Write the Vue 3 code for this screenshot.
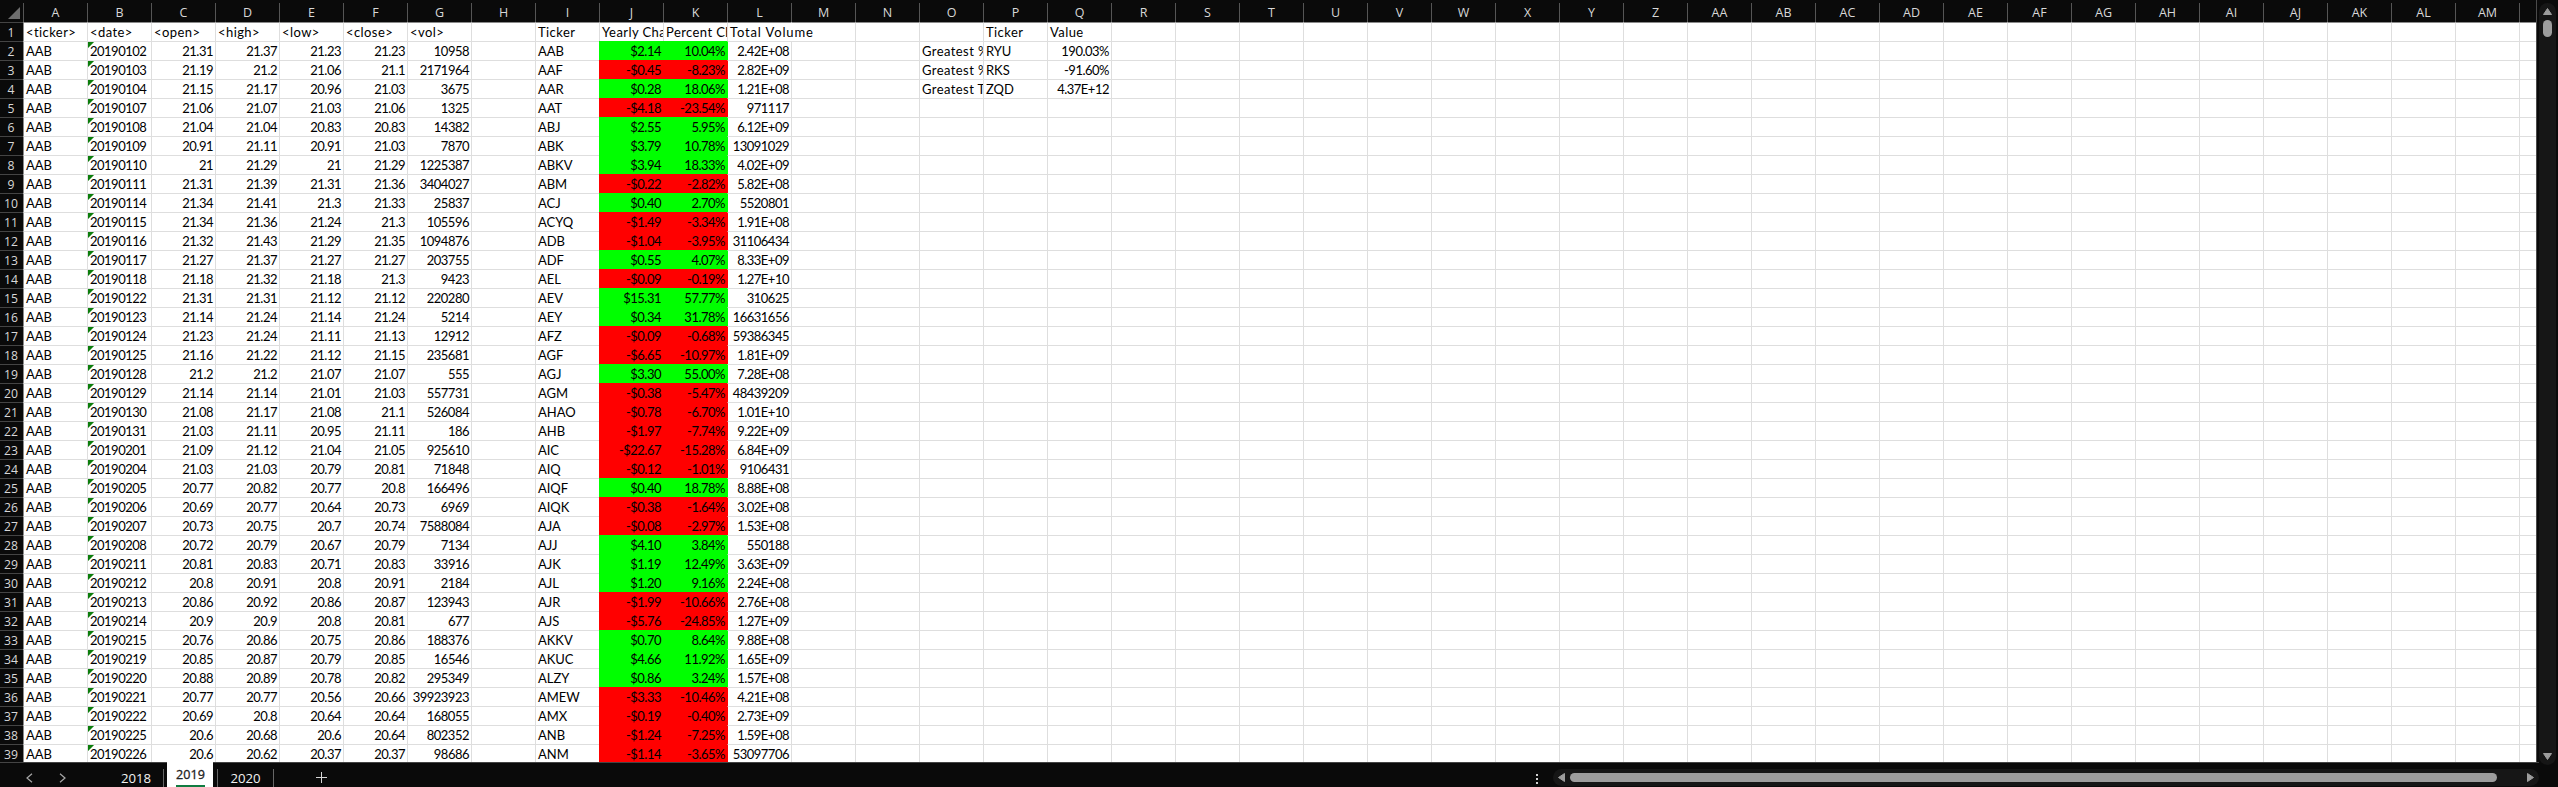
<script setup>
const colName = (i) => (i < 26 ? '' : 'A') + String.fromCharCode(65 + (i % 26))
const columns = Array.from({ length: 39 }, (_, i) => colName(i))

const prices = `20190102 21.31 21.37 21.23 21.23 10958
20190103 21.19 21.2 21.06 21.1 2171964
20190104 21.15 21.17 20.96 21.03 3675
20190107 21.06 21.07 21.03 21.06 1325
20190108 21.04 21.04 20.83 20.83 14382
20190109 20.91 21.11 20.91 21.03 7870
20190110 21 21.29 21 21.29 1225387
20190111 21.31 21.39 21.31 21.36 3404027
20190114 21.34 21.41 21.3 21.33 25837
20190115 21.34 21.36 21.24 21.3 105596
20190116 21.32 21.43 21.29 21.35 1094876
20190117 21.27 21.37 21.27 21.27 203755
20190118 21.18 21.32 21.18 21.3 9423
20190122 21.31 21.31 21.12 21.12 220280
20190123 21.14 21.24 21.14 21.24 5214
20190124 21.23 21.24 21.11 21.13 12912
20190125 21.16 21.22 21.12 21.15 235681
20190128 21.2 21.2 21.07 21.07 555
20190129 21.14 21.14 21.01 21.03 557731
20190130 21.08 21.17 21.08 21.1 526084
20190131 21.03 21.11 20.95 21.11 186
20190201 21.09 21.12 21.04 21.05 925610
20190204 21.03 21.03 20.79 20.81 71848
20190205 20.77 20.82 20.77 20.8 166496
20190206 20.69 20.77 20.64 20.73 6969
20190207 20.73 20.75 20.7 20.74 7588084
20190208 20.72 20.79 20.67 20.79 7134
20190211 20.81 20.83 20.71 20.83 33916
20190212 20.8 20.91 20.8 20.91 2184
20190213 20.86 20.92 20.86 20.87 123943
20190214 20.9 20.9 20.8 20.81 677
20190215 20.76 20.86 20.75 20.86 188376
20190219 20.85 20.87 20.79 20.85 16546
20190220 20.88 20.89 20.78 20.82 295349
20190221 20.77 20.77 20.56 20.66 39923923
20190222 20.69 20.8 20.64 20.64 168055
20190225 20.6 20.68 20.6 20.64 802352
20190226 20.6 20.62 20.37 20.37 98686`.split('\n').map((l) => l.split(' '))

const summary = `AAB $2.14 10.04% 2.42E+08
AAF -$0.45 -8.23% 2.82E+09
AAR $0.28 18.06% 1.21E+08
AAT -$4.18 -23.54% 971117
ABJ $2.55 5.95% 6.12E+09
ABK $3.79 10.78% 13091029
ABKV $3.94 18.33% 4.02E+09
ABM -$0.22 -2.82% 5.82E+08
ACJ $0.40 2.70% 5520801
ACYQ -$1.49 -3.34% 1.91E+08
ADB -$1.04 -3.95% 31106434
ADF $0.55 4.07% 8.33E+09
AEL -$0.09 -0.19% 1.27E+10
AEV $15.31 57.77% 310625
AEY $0.34 31.78% 16631656
AFZ -$0.09 -0.68% 59386345
AGF -$6.65 -10.97% 1.81E+09
AGJ $3.30 55.00% 7.28E+08
AGM -$0.38 -5.47% 48439209
AHAO -$0.78 -6.70% 1.01E+10
AHB -$1.97 -7.74% 9.22E+09
AIC -$22.67 -15.28% 6.84E+09
AIQ -$0.12 -1.01% 9106431
AIQF $0.40 18.78% 8.88E+08
AIQK -$0.38 -1.64% 3.02E+08
AJA -$0.08 -2.97% 1.53E+08
AJJ $4.10 3.84% 550188
AJK $1.19 12.49% 3.63E+09
AJL $1.20 9.16% 2.24E+08
AJR -$1.99 -10.66% 2.76E+08
AJS -$5.76 -24.85% 1.27E+09
AKKV $0.70 8.64% 9.88E+08
AKUC $4.66 11.92% 1.65E+09
ALZY $0.86 3.24% 1.57E+08
AMEW -$3.33 -10.46% 4.21E+08
AMX -$0.19 -0.40% 2.73E+09
ANB -$1.24 -7.25% 1.59E+08
ANM -$1.14 -3.65% 53097706`.split('\n').map((l) => l.split(' '))

const greatest = [
  ['Greatest %', 'RYU', '190.03%'],
  ['Greatest %', 'RKS', '-91.60%'],
  ['Greatest T', 'ZQD', '4.37E+12']
]

const head = {
  0: '<ticker>', 1: '<date>', 2: '<open>', 3: '<high>', 4: '<low>', 5: '<close>', 6: '<vol>',
  8: 'Ticker', 9: 'Yearly Cha', 10: 'Percent Ch', 11: 'Total Volume', 15: 'Ticker', 16: 'Value'
}

const rows = []
rows.push(Array.from({ length: 40 }, (_, c) => ({
  t: head[c] || '',
  k: [c === 11 ? 'spill' : 'label', c === 12 ? 'open' : '']
})))
prices.forEach((p, r) => {
  const s = summary[r]
  const g = greatest[r]
  const tone = s[1].startsWith('-') ? 'loss' : 'gain'
  rows.push(Array.from({ length: 40 }, (_, c) => {
    if (c === 0) return { t: 'AAB', k: [] }
    if (c === 1) return { t: p[0], k: ['flag'] }
    if (c < 7) return { t: p[c - 1], k: ['num'] }
    if (c === 8) return { t: s[0], k: [] }
    if (c === 9 || c === 10) return { t: s[c - 8], k: ['num', tone] }
    if (c === 11) return { t: s[3], k: ['num', 'after-' + tone] }
    if (g && c >= 14 && c <= 16) return { t: g[c - 14], k: [c === 16 ? 'num' : c === 14 ? 'label' : ''] }
    return { t: '', k: [] }
  }))
})
</script>

<template>
  <div class="app">
    <div class="upper">
      <div class="sheet">
        <div class="colheads">
          <div class="corner"><svg width="12" height="12"><path d="M12 0V12H0Z" fill="#6e6e6e" /></svg></div>
          <div v-for="c in columns" :key="c" class="colhead"><span>{{ c }}</span></div>
          <div class="colhead"></div>
        </div>
        <div v-for="(row, r) in rows" :key="r" class="row" :class="{ first: r === 0 }">
          <div class="rowhead">{{ r + 1 }}</div>
          <div v-for="(cell, c) in row" :key="c" class="cell" :class="cell.k">{{ cell.t }}</div>
        </div>
      </div>
      <div class="vscroll">
        <svg width="9" height="7"><path d="M4.5 0.5L8.5 6.5H0.5Z" fill="#9d9d9d" stroke="#9d9d9d" stroke-linejoin="round" /></svg>
        <div class="vthumb"></div>
        <svg class="down" width="9" height="7"><path d="M4.5 6.5L8.5 0.5H0.5Z" fill="#9d9d9d" stroke="#9d9d9d" stroke-linejoin="round" /></svg>
      </div>
    </div>
    <div class="bar">
      <div class="nav">
        <svg width="7" height="10"><path d="M6 0.8L1 5L6 9.2" fill="none" stroke="#a8a8a8" stroke-width="1.2" /></svg>
        <svg width="7" height="10"><path d="M1 0.8L6 5L1 9.2" fill="none" stroke="#a8a8a8" stroke-width="1.2" /></svg>
      </div>
      <div class="tab t18">2018</div>
      <div class="tab active"><span>2019</span></div>
      <div class="tab t20">2020</div>
      <svg class="plus" width="11" height="11"><path d="M5.5 0V11M0 5.5H11" stroke="#d6d6d6" stroke-width="1" /></svg>
      <div class="dots"><i></i><i></i><i></i></div>
      <div class="hscroll">
        <svg width="7" height="9"><path d="M0.5 4.5L6.5 0.5V8.5Z" fill="#9d9d9d" stroke="#9d9d9d" stroke-linejoin="round" /></svg>
        <div class="hthumb"></div>
        <svg class="right" width="7" height="9"><path d="M6.5 4.5L0.5 0.5V8.5Z" fill="#9d9d9d" stroke="#9d9d9d" stroke-linejoin="round" /></svg>
      </div>
    </div>
  </div>
</template>

<style>
body { margin: 0; background: #0a0a0a; }
</style>

<style scoped>
.app {
  width: 2558px;
  height: 787px;
  overflow: hidden;
  background: #0a0a0a;
  display: flex;
  flex-direction: column;
}
.upper { display: flex; height: 762px; }
.sheet {
  width: 2536px;
  height: 762px;
  overflow: hidden;
  border-right: 1px solid #4a4a4a;
}
.colheads { display: flex; height: 22px; width: 2583px; }
.corner {
  flex: 0 0 23px;
  box-sizing: border-box;
  padding: 7px 0 0 8px;
}
.corner svg { display: block; }
.colhead {
  flex: 0 0 64px;
  box-sizing: border-box;
  height: 19px;
  margin-top: 3px;
  border-left: 1px solid #555;
  color: #d8d8d8;
  font: 12.5px/19px "Open Sans", sans-serif;
  text-align: center;
}
.row { display: flex; height: 19px; width: 2583px; }
.rowhead {
  flex: 0 0 23px;
  box-sizing: border-box;
  border-top: 1px solid #444;
  padding-right: 1px;
  color: #d8d8d8;
  font: 12.2px/19px "Open Sans", sans-serif;
  text-align: center;
}
.cell {
  flex: 0 0 64px;
  min-width: 0;
  box-sizing: border-box;
  height: 19px;
  border-top: 1px solid #dedede;
  border-left: 1px solid #dedede;
  background: #fff;
  color: #000;
  padding: 0 2px;
  font: 13px/18px Lato, sans-serif;
  letter-spacing: -0.05px;
  white-space: nowrap;
  overflow: hidden;
}
.rowhead + .cell { border-left-color: #8a8a8a; }
.first .cell { border-top-color: #8a8a8a; }
.label { letter-spacing: 0.42px; }
.num { text-align: right; letter-spacing: -0.5px; }
.flag {
  letter-spacing: -0.5px;
  background: linear-gradient(135deg, #0b7d0b 0 4.2px, #fff 4.3px);
}
.spill {
  overflow: visible;
  position: relative;
  letter-spacing: 0.85px;
}
.cell.open { border-left-color: #fff; }
.gain { background: #0f0; border-color: #0f0; }
.loss { background: #f00; border-color: #f00; }
.after-gain { border-left-color: #0f0; }
.after-loss { border-left-color: #f00; }
.vscroll {
  box-sizing: border-box;
  width: 17px;
  height: 762px;
  margin: 3px 0 0 2px;
  padding: 5px 0 5px 4px;
  border-radius: 9px;
  background: #161616;
  display: flex;
  flex-direction: column;
}
.vthumb {
  width: 9px;
  height: 17px;
  margin-top: 5px;
  border-radius: 4.5px;
  background: #9d9d9d;
}
.vscroll .down { margin-top: auto; }
.bar {
  box-sizing: border-box;
  width: 2539px;
  height: 25px;
  border-top: 1px solid #444;
  display: flex;
  align-items: flex-start;
}
.bar > * { flex-shrink: 0; }
.nav {
  width: 109px;
  display: flex;
  gap: 26px;
  padding: 10px 0 0 26px;
  box-sizing: border-box;
}
.tab {
  box-sizing: border-box;
  color: #f2f2f2;
  font: 13.2px/18px "Open Sans", sans-serif;
  text-align: center;
}
.t18 {
  width: 55px;
  height: 18px;
  margin-top: 6px;
  border-right: 1px solid #666;
  padding-left: 12px;
  text-align: left;
}
.active {
  width: 46px;
  height: 25px;
  margin: -1px 4px 0 3px;
  background: #fff;
  color: #222;
  padding: 4px 8px 0 9px;
}
.active span {
  display: block;
  height: 19px;
  line-height: 18px;
  border-bottom: 2px solid #107c41;
  font-size: 12.6px;
  -webkit-text-stroke: 0.3px #222;
}
.t20 {
  width: 57px;
  height: 18px;
  margin-top: 6px;
  border-left: 1px solid #666;
  border-right: 1px solid #666;
}
.plus { margin: 9px 0 0 42px; }
.dots {
  display: flex;
  flex-direction: column;
  gap: 2px;
  margin: 11px 0 0 1209px;
}
.dots i { width: 2px; height: 2px; background: #d0d0d0; }
.hscroll {
  box-sizing: border-box;
  flex: 0 0 986px;
  height: 17px;
  margin: 6px 0 0 15px;
  padding: 4px 5px;
  border-radius: 9px;
  background: #161616;
  display: flex;
}
.hthumb {
  width: 927px;
  height: 9px;
  margin-left: 5px;
  border-radius: 4.5px;
  background: #9d9d9d;
}
.hscroll .right { margin-left: auto; }
svg { flex: none; }
</style>
